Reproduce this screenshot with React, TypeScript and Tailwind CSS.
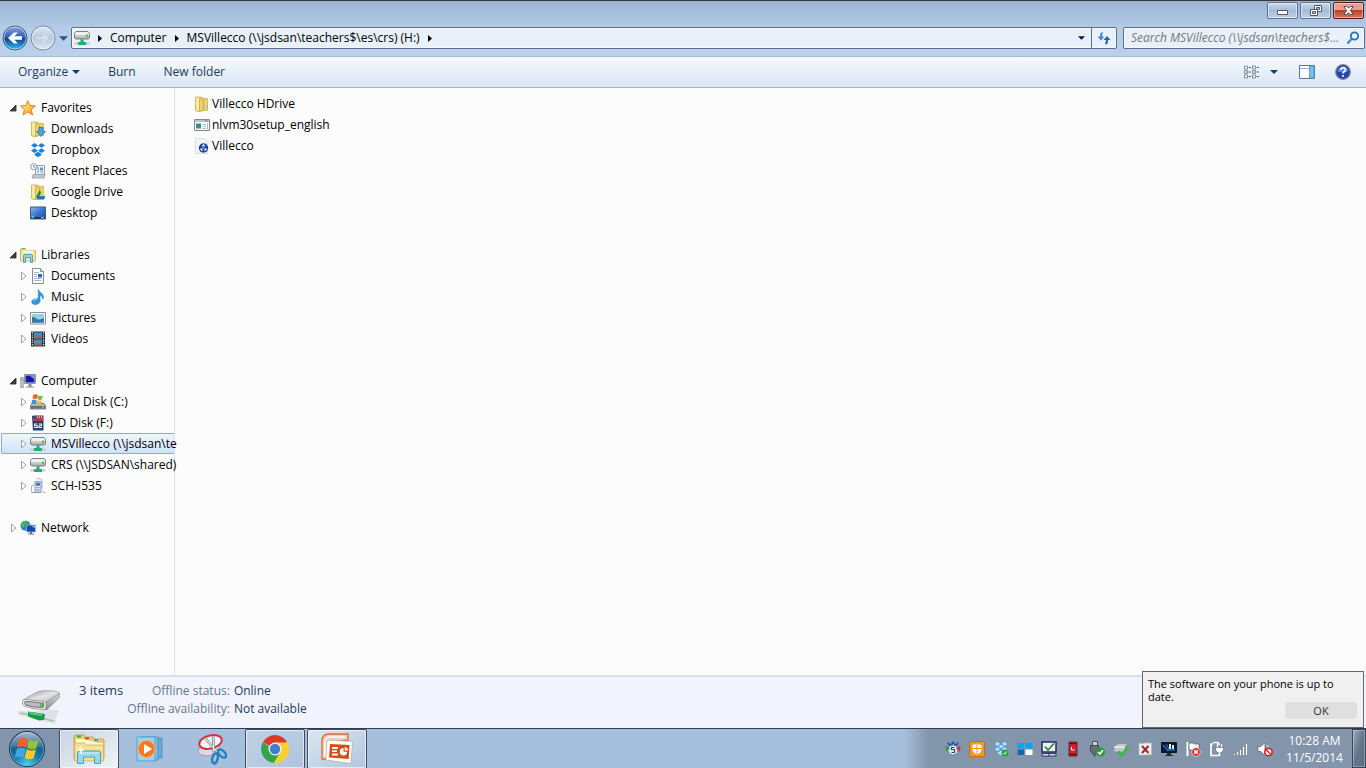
import type { ReactNode } from "react";

type IconProps = { className?: string };

const Svg = ({ className = "h-4 w-4", box = "0 0 16 16", children }: { className?: string; box?: string; children: ReactNode }) => (
  <svg viewBox={box} className={`${className} shrink-0`} fill="none" aria-hidden="true">{children}</svg>
);

/* ---------- navigation pane icons ---------- */

const StarIcon = () => (
  <Svg>
    <defs><linearGradient id="star" x1="0" y1="0" x2="1" y2="1"><stop offset="0" stopColor="#fff2a0" /><stop offset=".55" stopColor="#ffc83c" /><stop offset="1" stopColor="#f08a24" /></linearGradient></defs>
    <path d="M7.8.7 9.9 5.5l5.4.4-4.1 3.7 1.4 5.4-4.8-3-4.7 3 1.3-5.3L.6 6l5.2-.6Z" fill="url(#star)" stroke="#e07f3a" strokeLinejoin="round" />
  </Svg>
);
const FolderBase = () => (
  <>
    <path d="M1.500 1h6l1 1v13l-5 .5-2-1Z" fill="#e3c661" stroke="#c9a544" strokeWidth=".7" />
    <path d="M2 1.500h3v13.500l-1.500-.2L2 14Z" fill="#faeaa4" />
    <path d="M8 2.500h5.500V14.500H7.500l-2 1V4Z" fill="#ecd478" stroke="#caa74a" strokeWidth=".7" />
    <path d="M8.500 3.500h2v10.500h-2Z" fill="#d9b653" />
  </>
);
const FolderIcon = () => <Svg><FolderBase /><path d="M12.500 9h1v4h-1Z" fill="#7fc0e6" /></Svg>;
const DownloadsIcon = () => (
  <Svg><FolderBase /><path d="M9 6.500h4v4h2.400l-4.400 5-4.400-5H9Z" fill="#4aa8e8" stroke="#1f6fb0" strokeWidth=".8" /></Svg>
);
const DropboxIcon = () => (
  <Svg><path d="M4.500 1 8 3.400 4.500 5.800 1 3.400ZM11.500 1 15 3.400l-3.500 2.400L8 3.400ZM4.500 6.300 8 8.700l-3.500 2.400L1 8.700ZM11.500 6.300 15 8.700l-3.500 2.400L8 8.700ZM8 9.800l3.500 2.300v.8L8 15.200l-3.500-2.300v-.8Z" fill="#1a7fe0" /></Svg>
);
const RecentIcon = () => (
  <Svg>
    <path d="M5.500 2.500h9v9h-9Z" fill="#eef5fb" stroke="#8c9aa8" />
    <path d="M7 5h2M7 7h2M7 9h2M10.500 9H13" stroke="#6d8fb0" /><path d="M10 4.500h3v3h-3Z" fill="#4b9bd8" />
    <path d="M3 11.500h12l-1 3.500H2Z" fill="#c3cad0" stroke="#8e979f" strokeWidth=".7" />
    <circle cx="3.700" cy="3.700" r="3" fill="#fff" stroke="#8a949d" /><path d="M3.700 2v2h1.500" stroke="#556" strokeWidth=".8" />
  </Svg>
);
const DriveFolderIcon = () => (
  <Svg>
    <FolderBase />
    <path d="M9.800 6h1.700l3.700 6.200h-2.700Z" fill="#ffcf3f" /><path d="M9.800 6 11 8.500 7.800 15.300 6 12.700Z" fill="#14914f" /><path d="M9 12.300h6.400L14 15.400H7.500Z" fill="#2167d6" />
  </Svg>
);
const DesktopIcon = () => (
  <Svg>
    <defs><linearGradient id="desk" x1="0" y1="0" x2="1" y2="1"><stop stopColor="#8fb8ee" /><stop offset=".5" stopColor="#3d76cf" /><stop offset="1" stopColor="#1d4fa6" /></linearGradient></defs>
    <path d="M.5 2h15v12H.5Z" fill="url(#desk)" stroke="#43597c" /><path d="M1 12h14v1.500H1Z" fill="#1b2d4e" /><circle cx="2.700" cy="12" r="1.300" fill="#52c4cf" /><path d="M11 12.700h3" stroke="#c9d8ea" />
  </Svg>
);
const LibrariesIcon = () => (
  <Svg>
    <path d="M.5 14V2h5l1 1.500h9V14Z" fill="#f1da83" stroke="#cda94d" strokeWidth=".8" /><path d="M2 1.500h3" stroke="#4bb35b" /><path d="M2.500 3.500h11V6h-11Z" fill="#fff8d3" /><path d="M1 6h14v7.500H1Z" fill="#f8e69c" />
    <path d="M3.500 15.500V8.500q0-1 1-1h7q1 0 1 1v7h-2v-5h-5v5Z" fill="#8fd0ee" stroke="#3c93c0" strokeWidth=".8" />
  </Svg>
);
const DocumentIcon = () => (
  <Svg>
    <path d="M2.500.5h8l3 3v12h-11Z" fill="#fdfdfd" stroke="#858b91" /><path d="M10.500.5v3h3" fill="#dfe6ec" stroke="#858b91" />
    <path d="M4 4.500h5M4 6.500h3M4 8.500h3M4 10.500h7.500M4 12.500h7.500" stroke="#a9b5c6" /><path d="M8 6h4v3.500H8Z" fill="#2570b8" />
  </Svg>
);
const MusicIcon = () => (
  <Svg>
    <path d="M8.300.5q1 2.400 3.200 3.800 3 2.200 1.400 6-.3-3.500-3-4.300l.2 6.300q-.6 3-4.700 3.200-4-.2-3.600-3 1-3.300 6.500-2.700Z" fill="#2f9be0" stroke="#1b78bc" strokeWidth=".6" /><path d="M3.500 11.500q1.200-1.400 3-1" stroke="#a3dafa" />
  </Svg>
);
const PicturesIcon = () => (
  <Svg>
    <path d="M.5 2.500h15v11.500H.5Z" fill="#fff" stroke="#8a8f94" /><path d="M2 4h12v8.500H2Z" fill="#8fd0f4" /><path d="M2 7q3 .2 5 2t7-1v4.500H2Z" fill="#377f62" /><path d="M2 10.500q5-1.500 12 0v2H2Z" fill="#327bb7" />
  </Svg>
);
const VideosIcon = () => (
  <Svg>
    <path d="M1 .5h14v15H1Z" fill="#25323d" /><path d="M4 1.500h8v6H4ZM4 8.500h8v6H4Z" fill="#458fcf" /><path d="m5 5 2-1.500 1.500 2L11 4l1 3.500H5ZM4 13l3-1 2 1 3-2v3.500H4Z" fill="#a8614f" />
    <path d="M2.500 1v14M13.500 1v14" stroke="#dce5ea" strokeWidth="1.300" strokeDasharray="1.200 1.200" />
  </Svg>
);
const ComputerIcon = () => (
  <Svg>
    <path d="M.7 4.500h2.600v10H.7Z" fill="#c8ccd0" stroke="#7e868d" strokeWidth=".7" /><path d="M1.300 7h1.300" stroke="#37b54a" /><path d="M4.500 1.500h11v9h-11Z" fill="#d6dade" stroke="#8d959c" /><path d="M5.500 2.500h9v7h-9Z" fill="#1717a8" /><path d="M9.500 2.500h5v4Z" fill="#7a94ee" /><path d="M8.500 11h3v2.500h2.500v1H6v-1h2.500Z" fill="#858d96" />
  </Svg>
);
const LocalDiskIcon = () => (
  <Svg>
    <path d="M2.500 9h11l2 2.500v3.500H.5v-3.500Z" fill="#aeb6bd" stroke="#656d75" strokeWidth=".8" /><path d="M1 12h14v2.500H1Z" fill="#667079" /><path d="M12 12.500h2v1.500h-2Z" fill="#56dc4a" />
    <path d="M3.300 1q2.500-1.300 4.500 0L7 5q-2.300-1-4.500.1Z" fill="#ed5a26" /><path d="M8.300 1.400q2.300 1 4.500 0l-1 4q-2.200 1-4.300-.1Z" fill="#7db93c" /><path d="M2.200 6q2.300-1 4.500 0l-.8 3.800q-2.200-.8-4.500.2Z" fill="#3c93dc" /><path d="M7.200 6.300q2.300 1 4.300 0l-.9 4q-2.200.8-4.200-.1Z" fill="#f7bb24" />
  </Svg>
);
const SdIcon = () => (
  <Svg><path d="M2 1 4 .5h9.500v15H3Z" fill="#233f6e" /><path d="M3 1.500h10V6H3Z" fill="#c43a3c" /><path d="M3 1.500h3V4H3Z" fill="#3a5484" /><path d="M7.500 1v2M9.500 1v2M11.500 1v2" stroke="#e8e4e4" strokeWidth=".7" /><path d="M7.300 9H4.500v1.700h2.800v1.800H4M8.700 9h2.800v1.700H9v1.800h3" stroke="#f0f4fa" strokeWidth="1.100" /></Svg>
);
const NetDriveIcon = ({ className }: IconProps) => (
  <Svg className={className}>
    <defs><linearGradient id="drv" x1="0" y1="0" x2="0" y2="1"><stop stopColor="#fbfbfb" /><stop offset="1" stopColor="#a9a9a9" /></linearGradient></defs>
    <path d="M2 1.500h12l1.500 2V8l-1.500 1H2L.5 8V3.500Z" fill="url(#drv)" stroke="#757575" strokeWidth=".9" /><path d="M1 4h14" stroke="#fff" /><path d="M12 4.500h1.800V7H12Z" fill="#37c92e" /><path d="M6.500 9.300h3v3h-3Z" fill="#26a768" /><path d="M.5 13.500h15" stroke="#c3cbc7" strokeWidth="2" /><path d="M4 13.500h8" stroke="#23b06c" strokeWidth="3" />
  </Svg>
);
const PhoneIcon = () => (
  <Svg>
    <path d="M6.500.8q5-1 5.500 2v8M1.500 14V9q0-3 3-2" stroke="#a8aecf" /><path d="M5 3.500h6v11H5Z" fill="#e0e5ee" stroke="#7e87a0" strokeWidth=".8" /><path d="M6 4.700h4v3H6Z" fill="#2f78c4" /><path d="M6.500 9.500h3M6.500 11.500h3M6.500 13h3" stroke="#8791a5" strokeWidth=".8" /><path d="M1.500 14.500H5M12.500 13.500l2.500 1.500" stroke="#9299c0" />
  </Svg>
);
const NetworkIcon = () => (
  <Svg>
    <circle cx="5.500" cy="5.700" r="5" fill="#2686ce" /><path d="M3 1.500q3-1 4 1L5 4.500 3.500 8 1 6ZM7 4l3 1v4H7Z" fill="#56b848" /><path d="M6.500 5h9v7h-9Z" fill="#1744bb" stroke="#aeb9c6" strokeWidth=".8" /><path d="M11 5.500h4v3Z" fill="#89b8f4" /><path d="M10 12h2v1.500h2v1H8v-1h2Z" fill="#66727f" />
  </Svg>
);
const SetupIcon = () => (
  <Svg><path d="M.5 2.500h15v11H.5Z" fill="#fbfcfd" stroke="#84898e" /><path d="M1 3h14v2H1Z" fill="#b9c5d1" /><path d="M11 4h3" stroke="#4c5966" strokeDasharray="1 .5" /><path d="M2 6.500h5v5H2Z" fill="#379187" /><path d="M8.500 7.500H12M8.500 9.500H12M8.500 11.500H12M13.500 6v6.500" stroke="#b6bdc4" /></Svg>
);
const WebFileIcon = () => (
  <Svg><path d="M1.500.5h9l3 3v12h-12Z" fill="#f3f4f6" stroke="#d4d7da" strokeWidth=".8" /><circle cx="9.500" cy="10" r="4.700" fill="#1b3f91" /><path d="m9.500 5.500-2 3h4ZM5.500 11l3-1v3.500ZM13.500 11l-3-1v3.500Z" fill="#d3e4f7" /><circle cx="9.500" cy="10" r="1.200" fill="#4a86cc" /></Svg>
);

/* ---------- window chrome ---------- */

const NavArrow = ({ forward = false }: { forward?: boolean }) => (
  <Svg className="h-[26px] w-[26px]" box="0 0 26 26">
    <defs>
      <linearGradient id="back" x1="0" y1="0" x2="0" y2="1"><stop stopColor="#8ea9df" /><stop offset=".48" stopColor="#2c58b2" /><stop offset=".5" stopColor="#123b91" /><stop offset="1" stopColor="#27c1f3" /></linearGradient>
      <linearGradient id="fwd" x1="0" y1="0" x2="0" y2="1"><stop stopColor="#dfe9f3" /><stop offset=".5" stopColor="#b9cadd" /><stop offset="1" stopColor="#dce8f5" /></linearGradient>
    </defs>
    <circle cx="13" cy="13" r="12" fill={forward ? "url(#fwd)" : "url(#back)"} stroke={forward ? "#71859d" : "#425b83"} />
    <circle cx="13" cy="13" r="11" stroke="#fff" strokeOpacity=".55" />
    {forward ? (
      <path d="M6 11.500h7.500L10.500 8H14l5.500 5-5.500 5h-3.500l3-3.500H6Z" fill="#d3dfeb" stroke="#b9c8d8" strokeWidth=".6" />
    ) : (
      <path d="M20 11.300h-7.500l3.300-3.800h-4L6 13l5.800 5.500h4l-3.300-3.800H20Z" fill="#fff" />
    )}
  </Svg>
);
const Caret = ({ className }: IconProps) => <Svg className={className} box="0 0 8 4"><path d="M0 0h8L4 4Z" fill="currentColor" /></Svg>;
const Crumb = () => <Svg className="h-[7px] w-1" box="0 0 4 7"><path d="M0 0v7l4-3.500Z" fill="#000" /></Svg>;
const RefreshIcon = () => (
  <Svg className="h-[14px] w-[14px]" box="0 0 14 14"><path d="M5.500 1Q3 1.500 3 4v1.500H.5L4 9.500 7.500 5.500H5V4q0-.8 1-1Z" fill="#3f8bd2" /><path d="M8.500 13.500q2.500-.5 2.500-3V9h2.500L10 5 6.500 9H9v1.500q0 .8-1 1Z" fill="#2764b0" /></Svg>
);
const SearchIcon = () => (
  <Svg className="h-[14px] w-[14px]" box="0 0 14 14"><circle cx="8.500" cy="5" r="3.700" stroke="#2773bd" strokeWidth="1.800" /><path d="m5.500 8-4 4.500" stroke="#3a86ca" strokeWidth="2.200" /></Svg>
);
const ViewIcon = () => (
  <Svg className="h-[14px] w-4" box="0 0 16 14">
    {[1, 5.5, 10].map((y) => (
      <g key={y}>
        <path d={`M.5 ${y}h3v3h-3ZM8.500 ${y}h3v3h-3Z`} fill="#fff" stroke="#7184a0" strokeWidth=".9" /><path d={`M4.500 ${y + 1.5}H7M12.500 ${y + 1.5}H15`} stroke="#56697f" />
      </g>
    ))}
    <path d="M1.500 6.500h1v1h-1ZM9.500 6.500h1v1h-1Z" fill="#d33" />
  </Svg>
);
const PaneIcon = () => (
  <Svg className="h-[14px] w-4" box="0 0 16 14"><path d="M.5.5h15v13H.5Z" fill="#fff" stroke="#5b7898" /><path d="M1 3.500h9" stroke="#9db2ca" /><path d="M10.500 1H15v12h-4.500Z" fill="#72c3e8" stroke="#4d90b8" strokeWidth=".8" /></Svg>
);
const HelpIcon = () => (
  <Svg><circle cx="8" cy="8" r="7.300" fill="#2346b4" stroke="#7c8494" strokeWidth="1.300" /><path d="M3 5q5-4 10 0l-1 3H3Z" fill="#5c86dc" /><path d="M5.700 6q0-2.300 2.400-2.300t2.300 2q0 1.300-1.300 2T8 9.500M8 11v1.700" stroke="#fff" strokeWidth="1.700" /></Svg>
);

/* ---------- details pane and taskbar ---------- */

const BigDriveIcon = () => (
  <Svg className="h-9 w-[46px]" box="0 0 46 36">
    <defs>
      <linearGradient id="top" x1="0" y1="0" x2="1" y2="1"><stop stopColor="#8f8f8f" /><stop offset=".5" stopColor="#e4e4e4" /><stop offset="1" stopColor="#b4b4b4" /></linearGradient>
      <linearGradient id="side" x1="0" y1="0" x2="0" y2="1"><stop stopColor="#d9d9d9" /><stop offset="1" stopColor="#8b8b8b" /></linearGradient>
    </defs>
    <path d="M8 25 30 20l12 1-3 9-24-1Z" fill="#dfe2e8" />
    <path d="M6.500 10.500 20 3q8-2.500 20-.5 2.500.5 2.500 2.500L29 13.500q-12-.5-22.500-3Z" fill="url(#top)" stroke="#8e8e8e" strokeWidth=".6" />
    <path d="m29 13 13.500-8.500v4L30 20.500h-3Z" fill="url(#side)" stroke="#868686" strokeWidth=".6" />
    <path d="M7 10.500q11 .5 20 2 2.500.5 2.200 4-.2 4-2.700 4-11 0-19-3.500-2.500-1-2-4 .3-2.500 1.500-2.500Z" fill="#f2f2f2" stroke="#8a8a8a" strokeWidth=".8" />
    <path d="M8 12.500q9 0 16 1.500v4.500q-9 0-15.500-2.700Q7 15 8 12.500Z" fill="#bcbcbc" stroke="#555" strokeWidth=".8" />
    <path d="M25 13.500q2 0 2 2.500t-2 3Z" fill="#43d320" stroke="#2c5d22" strokeWidth=".5" />
    <path d="m3 24 11 2 18 5 5 1" stroke="#dfe6e4" strokeWidth="5" strokeLinecap="round" /><path d="m3 24 11 2 18 5 5 1" stroke="#a3bcb2" strokeWidth="1.500" />
    <path d="m11 22.500 17 2.500-1 6-5 .5-11-4Z" fill="#189a49" /><path d="m12 24 13 2" stroke="#4fd077" strokeWidth="2" />
  </Svg>
);
const StartOrb = () => (
  <Svg className="h-[38px] w-[38px]" box="0 0 38 38">
    <defs>
      <radialGradient id="orb" cx=".5" cy=".95" r=".95"><stop stopColor="#41d4ee" /><stop offset=".4" stopColor="#147bb0" /><stop offset="1" stopColor="#143b65" /></radialGradient>
      <linearGradient id="gloss" x1="0" y1="0" x2="0" y2="1"><stop stopColor="#fff" stopOpacity=".65" /><stop offset="1" stopColor="#fff" stopOpacity=".12" /></linearGradient>
    </defs>
    <circle cx="19" cy="19" r="17.500" fill="url(#orb)" stroke="#1b3853" /><circle cx="19" cy="19" r="16.500" stroke="#8ecae7" strokeOpacity=".6" />
    <path d="M3 18a16 16 0 0 1 32 0q-16-5-32 0Z" fill="url(#gloss)" />
    <path d="M11 9q4.500-2.500 9 .2L18 17.700q-4.500-2.300-9 .2Z" fill="#f0612b" /><path d="M21 9.700q4.500 2.500 9.500.2l-2.300 8.500q-4.700 2-9.200-.4Z" fill="#8cc63e" /><path d="M8.700 19q4.500-2.300 9 0l-2 8.800q-4.500-2.300-9 .2Z" fill="#42a5e3" /><path d="M18.700 19.200q4.500 2.500 9.200.3l-2.300 8.800q-4.500 2-9-.3Z" fill="#fdc72e" />
  </Svg>
);
const ExplorerIcon = () => (
  <Svg className="h-8 w-8" box="0 0 32 32">
    <path d="M1 26V4q0-2 2-2h8l2 2h7l2 2h8q1 0 1 2v18Z" fill="#e8ca67" stroke="#b99742" strokeWidth=".8" />
    <path d="M3 6h13v5H3ZM11 8h13v4H11ZM18 10h12v4H18Z" fill="#fff8cf" /><path d="M4 3.500h4" stroke="#2fae3b" strokeWidth="2" /><path d="M12 5.500h4" stroke="#d63b2f" strokeWidth="2" /><path d="M21 7.500h4" stroke="#3496d8" strokeWidth="2" />
    <path d="M1.500 10h10l2 2h17v16h-29Z" fill="#f3de8a" stroke="#cfae55" strokeWidth=".7" /><path d="M3 15h26" stroke="#fbf0bd" />
    <path d="M4.500 30.500V20q0-2 2-2h19q2 0 2 2v10.500h-6V24h-11v6.500Z" fill="#96d6ee" stroke="#4a9fc4" /><path d="M6 20h20" stroke="#d3f1fb" /><path d="m8 12 1 4 3 1-3 1-1 4-1-4-3-1 3-1Z" fill="#fff" />
  </Svg>
);
const MediaPlayerIcon = () => (
  <Svg className="h-7 w-7" box="0 0 28 28">
    <path d="M9 3h17v20H9Z" fill="#69afd5" stroke="#4d8fb5" /><path d="M5 2h17v23H5Z" fill="#83c1e2" stroke="#4d8fb5" /><path d="M1 2h18v24H1Z" fill="#9dd0ea" stroke="#5e9fc2" />
    <circle cx="10.500" cy="14" r="8.500" fill="#f47b20" stroke="#fbb27b" /><path d="M8 9v10l8-5Z" fill="#fff" />
  </Svg>
);
const SnippingIcon = () => (
  <Svg className="h-8 w-8" box="0 0 32 32">
    <ellipse cx="12" cy="17" rx="11" ry="5.500" transform="rotate(-8 12 17)" fill="#d5ddea" stroke="#c98f9d" /><ellipse cx="13.500" cy="9" rx="11.500" ry="6.500" transform="rotate(-14 13.500 9)" fill="#f3f5f8" stroke="#d23443" strokeWidth="2" />
    <path d="m8 5 13 15M16 3l1 18" stroke="#6b747c" strokeWidth="2.600" /><path d="m8 5 13 15M16 3l1 18" stroke="#e5e9ec" strokeWidth="1.200" />
    <ellipse cx="25" cy="20.500" rx="2.800" ry="5" transform="rotate(-45 25 20.500)" stroke="#267fbd" strokeWidth="2.400" /><ellipse cx="18" cy="25.500" rx="2.700" ry="5" transform="rotate(12 18 25.500)" stroke="#267fbd" strokeWidth="2.400" />
  </Svg>
);
const ChromeIcon = () => (
  <Svg className="h-[30px] w-[30px]" box="0 0 30 30">
    <path d="M15 15 2.900 8a14 14 0 0 1 24.200 0Z" fill="#db3b2b" /><path d="M15 15h-3L2.900 8A14 14 0 0 0 14 29l6-11Z" fill="#37a34a" /><path d="M15 8.500h12.400A14 14 0 0 1 14 29l6.600-11Z" fill="#fcd034" />
    <circle cx="15" cy="15" r="6.500" fill="#f5f5f5" /><circle cx="15" cy="15" r="5.200" fill="#3d7fc9" />
  </Svg>
);
const PowerPointIcon = () => (
  <Svg className="h-8 w-8" box="0 0 32 32">
    <path d="M1 26V8q0-7 7-7h19v6L7 10v16Z" fill="#f6cdb6" stroke="#dc6a38" strokeWidth="1.300" /><path d="M4 24V9q1-5 6-5h14" stroke="#fff" strokeWidth="1.500" />
    <path d="m6 7 25.500 1.500L30 30.500 5 27Z" fill="#fff" stroke="#b9a79c" strokeWidth=".7" /><path d="m9 11 19.500 1-.8 14L8 24.500Z" fill="#d94a17" />
    <path d="M11 15h6M11 18.200h5M11 21.500h6" stroke="#fff" strokeWidth="1.800" /><path d="M22.500 15a3.700 3.700 0 1 0 3.700 3.700h-3.700Z" fill="#fff" /><path d="M23.700 14v3.500h3.300Q27 14.700 23.700 14Z" fill="#fff" />
  </Svg>
);

const TRAY: { label: string; art: ReactNode }[] = [
  { label: "Sync client", art: <><path d="M3 1.500 5 5 8 1.500 11 5l2-3.500" stroke="#275ca8" strokeWidth="1.800" /><circle cx="8" cy="9" r="5" fill="#d9e7f5" stroke="#3269ad" strokeDasharray="2 1" /><path d="M.8 4.500 5 7.500.8 10.500Z" fill="#399a3a" /><path d="M15.200 4.500 11 7.500l4.200 3Z" fill="#d4303e" /><path d="M9.500 6.500h-3v2h3v3h-3" stroke="#2b4d83" strokeWidth="1.200" /></> },
  { label: "Endpoint protection", art: <><rect x=".5" y=".5" width="15" height="15" rx="1" fill="#ed9a27" stroke="#cc6b15" /><path d="M3.500 4 8 2.800 12.500 4v4q0 3.500-4.500 5.500Q3.500 11.500 3.500 8Z" fill="#fff" /><path d="M8 3v10M3.500 7.500h9" stroke="#e98e22" /></> },
  { label: "Dropbox", art: <><path d="M4.500.5 8 3 4.500 5.300 1 3ZM11.500.5 15 3l-3.500 2.300L8 3ZM4.500 5.700 8 8l-3.500 2.500L1 8ZM11.500 5.700 15 8l-3.500 2.500L8 8ZM8 3l3.500 2.500L8 8 4.500 5.500ZM8 9l4 2.500v1L8 15l-4-2.500v-1Z" fill="#b9e0f8" stroke="#3b91cf" strokeWidth=".7" /><circle cx="12" cy="12" r="3.500" fill="#35a13a" /><path d="m10.300 12 1.200 1.300 2.200-2.800" stroke="#fff" /></> },
  { label: "Windows tiles", art: <><path d="M.5 2H7v5.500H.5ZM8.500 2H15.500v5.500H8.500Z" fill="#00a8ee" /><path d="M.5 8.500H7V14H.5Z" fill="#1763ae" /><path d="M8.500 8.500h7V14h-7Z" fill="#fff" /></> },
  { label: "Tablet settings", art: <><path d="M1 1h14v10H1Z" fill="#eef0f6" stroke="#242766" strokeWidth="1.500" /><path d="M4 5.500 7 9l6-6.500" stroke="#218b28" strokeWidth="1.700" /><path d="M1 12.700h14V15H1ZM8 12.700V15" fill="#fff" stroke="#242766" /></> },
  { label: "Reader", art: <><path d="M4 1h8v14H4Z" fill="#c82431" stroke="#7c1d25" /><path d="M4.500 2.500h7M4.500 13.500h7" stroke="#5d1118" strokeWidth="1.500" /><path d="M6.500 6v3h3" stroke="#fff" /></> },
  { label: "Safely remove hardware", art: <><path d="M3.500.5h5v4h-5Z" fill="#d2d5d8" stroke="#4d535a" /><path d="M1.500 4.500h8v6l-2 2h-4l-2-2Z" fill="#686e73" stroke="#43484e" /><path d="M5.500 12v3.500" stroke="#4d535a" strokeWidth="2" /><circle cx="11.500" cy="11" r="4.500" fill="#279b34" /><path d="m9 11 2 2 3-4" stroke="#fff" strokeWidth="1.500" /></> },
  { label: "Drive status", art: <><path d="M1 6 5 2.500h10L12 6v4l-1 1H1Z" fill="#c2c8cd" stroke="#8c959d" /><path d="M1 6h11" stroke="#fff" /><path d="m5 10.500 3.500 4L15 6" stroke="#3eb747" strokeWidth="2.800" /></> },
  { label: "Blocked item", art: <><path d="M2 2.500 4 2l1 1 2-1h7.500v12l-2-.5-2 .5H2Z" fill="#efefef" stroke="#b6b8ba" strokeWidth=".7" /><path d="m5 5 6.500 7M11.500 5 5 12" stroke="#9c2429" strokeWidth="1.900" /></> },
  { label: "Display settings", art: <><path d="M.5 1.500h15v10H.5Z" fill="#07162f" stroke="#15191f" /><path d="m2 4 5 6M5 3l3 5" stroke="#2f6fb2" strokeWidth="1.300" /><path d="M8 3h2v5H8ZM11 4h2v4h-2Z" fill="#dcecf8" /><path d="M7 9h7" stroke="#4c9cdb" /><path d="M6 12h4v2h2v1H4v-1h2Z" fill="#252a30" /></> },
  { label: "Action center", art: <><path d="M2.500 1v14" stroke="#fff" strokeWidth="2" /><path d="M4 2h4l2 1h4v7h-4L8 9H4Z" fill="#fff" stroke="#535d69" strokeWidth=".8" /><circle cx="11" cy="11" r="4.300" fill="#d92b2b" stroke="#f6dede" strokeWidth=".7" /><path d="m9.200 9.200 3.600 3.600M12.800 9.200 9.200 12.800" stroke="#fff" strokeWidth="1.400" /></> },
  { label: "Power", art: <><path d="M4 1.500h5V3h2M10 14.500H2V3h2" stroke="#fff" strokeWidth="1.700" /><path d="M8.500 3v4M12.500 3v4" stroke="#fff" strokeWidth="1.300" /><path d="M6.500 6.500h8V9l-2 2.500h-4L6.500 9Z" fill="#fff" stroke="#4f5c6b" strokeWidth=".6" /><path d="M10.500 11v4" stroke="#fff" strokeWidth="1.500" /></> },
  { label: "Network", art: <path d="M.5 12.500h2v2h-2ZM3.500 10.500h2v4h-2ZM6.500 8.500h2v6h-2ZM9.500 5.500h2v9h-2ZM12.500 2.500h2v12h-2Z" fill="#fff" stroke="#5a6878" strokeWidth=".5" /> },
  { label: "Volume muted", art: <><path d="M1 5.500h3L8 1.500v13L4 10.500H1Z" fill="#fff" stroke="#52606f" strokeWidth=".7" /><path d="M9.500 4q2 1.500 2 3" stroke="#fff" /><circle cx="11.500" cy="11" r="3.700" fill="#fff" stroke="#d9282b" strokeWidth="1.700" /><path d="m9 8.500 5 5" stroke="#d9282b" strokeWidth="1.500" /></> },
];

/* ---------- data ---------- */

type Node = { label: string; icon: ReactNode; expandable?: boolean; selected?: boolean };
type Group = { label: string; icon: ReactNode; open: boolean; items: Node[] };

const GROUPS: Group[] = [
  {
    label: "Favorites", icon: <StarIcon />, open: true,
    items: [
      { label: "Downloads", icon: <DownloadsIcon /> },
      { label: "Dropbox", icon: <DropboxIcon /> },
      { label: "Recent Places", icon: <RecentIcon /> },
      { label: "Google Drive", icon: <DriveFolderIcon /> },
      { label: "Desktop", icon: <DesktopIcon /> },
    ],
  },
  {
    label: "Libraries", icon: <LibrariesIcon />, open: true,
    items: [
      { label: "Documents", icon: <DocumentIcon />, expandable: true },
      { label: "Music", icon: <MusicIcon />, expandable: true },
      { label: "Pictures", icon: <PicturesIcon />, expandable: true },
      { label: "Videos", icon: <VideosIcon />, expandable: true },
    ],
  },
  {
    label: "Computer", icon: <ComputerIcon />, open: true,
    items: [
      { label: "Local Disk (C:)", icon: <LocalDiskIcon />, expandable: true },
      { label: "SD Disk (F:)", icon: <SdIcon />, expandable: true },
      { label: "MSVillecco (\\\\jsdsan\\te", icon: <NetDriveIcon />, expandable: true, selected: true },
      { label: "CRS (\\\\JSDSAN\\shared)", icon: <NetDriveIcon />, expandable: true },
      { label: "SCH-I535", icon: <PhoneIcon />, expandable: true },
    ],
  },
  { label: "Network", icon: <NetworkIcon />, open: false, items: [] },
];

const FILES = [
  { name: "Villecco HDrive", icon: <FolderIcon /> },
  { name: "nlvm30setup_english", icon: <SetupIcon /> },
  { name: "Villecco", icon: <WebFileIcon /> },
];

function Toggle({ open, label }: { open: boolean; label: string }) {
  return (
    <button className="grid h-4 w-2 shrink-0 place-items-center" aria-label={`Toggle ${label}`}>
      <Svg className="h-2 w-2" box="0 0 8 8">
        {open ? <path d="M7 1v6H1Z" fill="#404040" stroke="#262626" strokeWidth=".8" /> : <path d="M2.500 0v8L7 4Z" fill="#fff" stroke="#a0a0a0" />}
      </Svg>
    </button>
  );
}

function NavPane() {
  return (
    <nav className="flex w-[175px] shrink-0 flex-col gap-[21px] border-r border-[#d6e5f5] pt-[9px]">
      {GROUPS.map((g) => (
        <ul key={g.label}>
          <li className="flex h-[21px] items-center pl-[9px]">
            <Toggle open={g.open} label={g.label} />
            <a href="#" className="ml-[3px] flex items-center gap-[5px]">{g.icon}{g.label}</a>
          </li>
          {g.items.map((n) => (
            <li
              key={n.label}
              className={`ml-px flex h-[21px] items-center border border-r-0 pl-[17px] ${n.selected ? "rounded-l-xs border-[#84acdd] bg-linear-to-b from-[#f2f7fe] to-[#cfe1f9]" : "border-transparent"}`}
            >
              {n.expandable ? <Toggle open={false} label={n.label} /> : <span className="w-2 shrink-0" />}
              <a href="#" className="ml-[3px] flex items-center gap-[5px] whitespace-nowrap">{n.icon}{n.label}</a>
            </li>
          ))}
        </ul>
      ))}
    </nav>
  );
}

function TitleBar() {
  const btn = "grid h-[17px] w-[31px] place-items-center rounded-xs border border-[#5d7490] bg-linear-to-b from-[#c8d8ea] via-[#a5bcd7] to-[#bdd0e8] inset-ring inset-ring-white/50";
  return (
    <header className="border-t border-[#35363c] bg-linear-to-b from-[#98b4d3] via-[#b5cce7] to-[#b9d1ea]">
      <div className="flex h-[26px] justify-end gap-[2px] pt-px pr-[2px]">
        <button className={btn} aria-label="Minimize"><Svg className="h-[9px] w-[11px]" box="0 0 11 9"><path d="M.5 4.500h10v4H.5Z" fill="#fff" stroke="#525a66" /></Svg></button>
        <button className={btn} aria-label="Restore"><Svg className="h-[11px] w-3" box="0 0 12 11"><path d="M4.500.5h7v6h-7Z" fill="#fff" stroke="#525a66" /><path d="M6.500 2.500h3v2h-3Z" fill="#aabfd8" stroke="#525a66" /><path d="M.5 4.500h7v6h-7Z" fill="#fff" stroke="#525a66" /><path d="M2.500 6.500h3v2h-3Z" fill="#aabfd8" stroke="#525a66" /></Svg></button>
        <button className="grid h-[17px] w-[31px] place-items-center rounded-xs border border-[#5a1a1c] bg-linear-to-b from-[#e2a190] from-45% via-[#bd3f26] via-50% to-[#d67a5c] inset-ring inset-ring-white/40" aria-label="Close">
          <Svg className="h-[9px] w-[11px]" box="0 0 11 9"><path d="M.8.5h3L5.500 2.300 7.200.5h3L7.300 4.500l2.900 4h-3L5.500 6.700 3.800 8.500h-3l2.900-4Z" fill="#fff" stroke="#51505a" /></Svg>
        </button>
      </div>
      <div className="flex h-[29px] items-start pb-[7px]">
        <div className="-mt-[2px] flex h-[26px] w-[71px] shrink-0 items-center pl-[2px]">
          <button aria-label="Back"><NavArrow /></button>
          <button className="ml-[2px]" aria-label="Forward"><NavArrow forward /></button>
          <button className="ml-[3px] text-[#27577f]" aria-label="Recent pages"><Caret className="h-[5px] w-[9px]" /></button>
        </div>
        <div className="flex h-[22px] min-w-0 flex-1 items-center rounded-xs border border-[#5c6f86] bg-[#e8f0f9] pl-[2px] inset-ring inset-ring-white/60">
          <NetDriveIcon className="h-4 w-4" />
          <div className="ml-2 flex flex-1 items-center gap-2 text-black">
            <Crumb />
            <button>Computer</button>
            <Crumb />
            <button>{"MSVillecco (\\\\jsdsan\\teachers$\\es\\crs) (H:)"}</button>
            <Crumb />
          </div>
          <button className="grid h-5 w-5 place-items-center text-[#111138]" aria-label="Previous locations"><Caret className="h-1 w-[7px]" /></button>
          <button className="grid h-5 w-[25px] place-items-center border-l border-[#5c6f86]" aria-label="Refresh"><RefreshIcon /></button>
        </div>
        <label className="ml-[6px] mr-px flex h-[22px] w-[242px] shrink-0 items-center rounded-xs border border-[#5c6f86] bg-[#e8f0f9] pr-1 pl-[7px] inset-ring inset-ring-white/60">
          <input type="text" aria-label="Search" placeholder={"Search MSVillecco (\\\\jsdsan\\teachers$..."} className="w-full min-w-0 bg-transparent italic outline-none placeholder:text-[#75797e]" />
          <SearchIcon />
        </label>
      </div>
    </header>
  );
}

function Toolbar() {
  return (
    <div className="flex h-8 shrink-0 items-center border-t border-b border-t-[#a5bcd8] border-b-[#a3b6cf] bg-linear-to-b from-[#fafcff] via-[#e6eff9] via-50% to-[#dce6f4] pr-[15px] pl-[18px] text-[#1e395b]">
      <button className="flex items-center gap-1">Organize <Caret className="h-1 w-2" /></button>
      <button className="ml-7">Burn</button>
      <button className="ml-7">New folder</button>
      <div className="ml-auto flex items-center">
        <button aria-label="Change view"><ViewIcon /></button>
        <button className="ml-[10px]" aria-label="More views"><Caret className="h-1 w-2" /></button>
        <button className="ml-[21px]" aria-label="Show preview pane"><PaneIcon /></button>
        <button className="ml-5" aria-label="Help"><HelpIcon /></button>
      </div>
    </div>
  );
}

function DetailsPane() {
  return (
    <footer className="flex h-[53px] shrink-0 items-start border-t-2 border-[#d4e1ef] bg-[#f1f4fc] pl-[17px] text-[#1e395b]">
      <div className="pt-3"><BigDriveIcon /></div>
      <p className="ml-4 pt-1 text-[13px] leading-[18px]">3 items</p>
      <dl className="ml-1 grid grid-cols-[auto_auto] gap-x-1 pt-[5px] leading-[18px]">
        <dt className="text-right text-[#68768b]">Offline status:</dt>
        <dd>Online</dd>
        <dt className="text-right text-[#68768b]">Offline availability:</dt>
        <dd>Not available</dd>
      </dl>
    </footer>
  );
}

function Taskbar() {
  const running = "grid h-10 w-[60px] place-items-center rounded-xs border border-[#3d4c60] inset-ring inset-ring-white/60";
  return (
    <div className="flex h-10 shrink-0 border-t border-[#2f3c4e] bg-[#a6bfdd]">
      <button className="grid w-[59px] place-items-center bg-[#8295ad] pr-[5px]" aria-label="Start"><StartOrb /></button>
      <button className={`${running} bg-linear-to-br from-[#c8d3df] to-[#f0f4f8]`} aria-label="Windows Explorer"><ExplorerIcon /></button>
      <button className="grid w-[62px] place-items-center" aria-label="Windows Media Player"><MediaPlayerIcon /></button>
      <button className="grid w-16 place-items-center" aria-label="Snipping Tool"><SnippingIcon /></button>
      <button className={`${running} bg-linear-to-br from-[#bfd1e6] to-[#afc4dc]`} aria-label="Google Chrome"><ChromeIcon /></button>
      <button className={`${running} ml-[2px] bg-linear-to-br from-[#dbe6f1] to-[#b1c6de]`} aria-label="PowerPoint"><PowerPointIcon /></button>
      <div className="ml-auto flex items-center bg-linear-to-r from-[#a6bfdd] to-[#8295ab] to-[24px] pl-10">
        <div className="flex gap-2">
          {TRAY.map((t) => (
            <button key={t.label} aria-label={t.label}><Svg>{t.art}</Svg></button>
          ))}
        </div>
        <button className="w-[79px] pl-1 text-center leading-[17px] text-white">
          <span className="block">10:28 AM</span>
          <span className="block">11/5/2014</span>
        </button>
        <button className="h-full w-[14px] border border-[#36475b] bg-linear-to-br from-[#9cabbc] via-[#64768a] to-[#5b6d82] inset-ring inset-ring-white/30" aria-label="Show desktop" />
      </div>
    </div>
  );
}

export default function App() {
  return (
    <div className="relative flex h-screen flex-col overflow-hidden bg-[#fcfcfc] font-['Open_Sans',sans-serif] text-xs text-black">
      <TitleBar />
      <Toolbar />
      <div className="flex min-h-0 flex-1">
        <NavPane />
        <main className="flex-1 pt-[5px] pl-[19px]">
          <ul>
            {FILES.map((f) => (
              <li key={f.name} className="flex h-[21px] items-center">
                <a href="#" className="flex items-center gap-[2px]">{f.icon}{f.name}</a>
              </li>
            ))}
          </ul>
        </main>
      </div>
      <DetailsPane />
      <Taskbar />

      {/* phone software notice */}
      <div role="status" className="absolute right-[2px] bottom-10 h-[57px] w-[222px] border border-[#666] bg-[#f0f0f0] pt-[5px] pr-[6px] pl-[5px] text-[11px] leading-[13px]">
        <p className="pr-3">The software on your phone is up to date.</p>
        <button className="-mt-px ml-auto block h-[17px] w-[72px] rounded-sm bg-[#dfdfdf] text-[#333]">OK</button>
      </div>
    </div>
  );
}
